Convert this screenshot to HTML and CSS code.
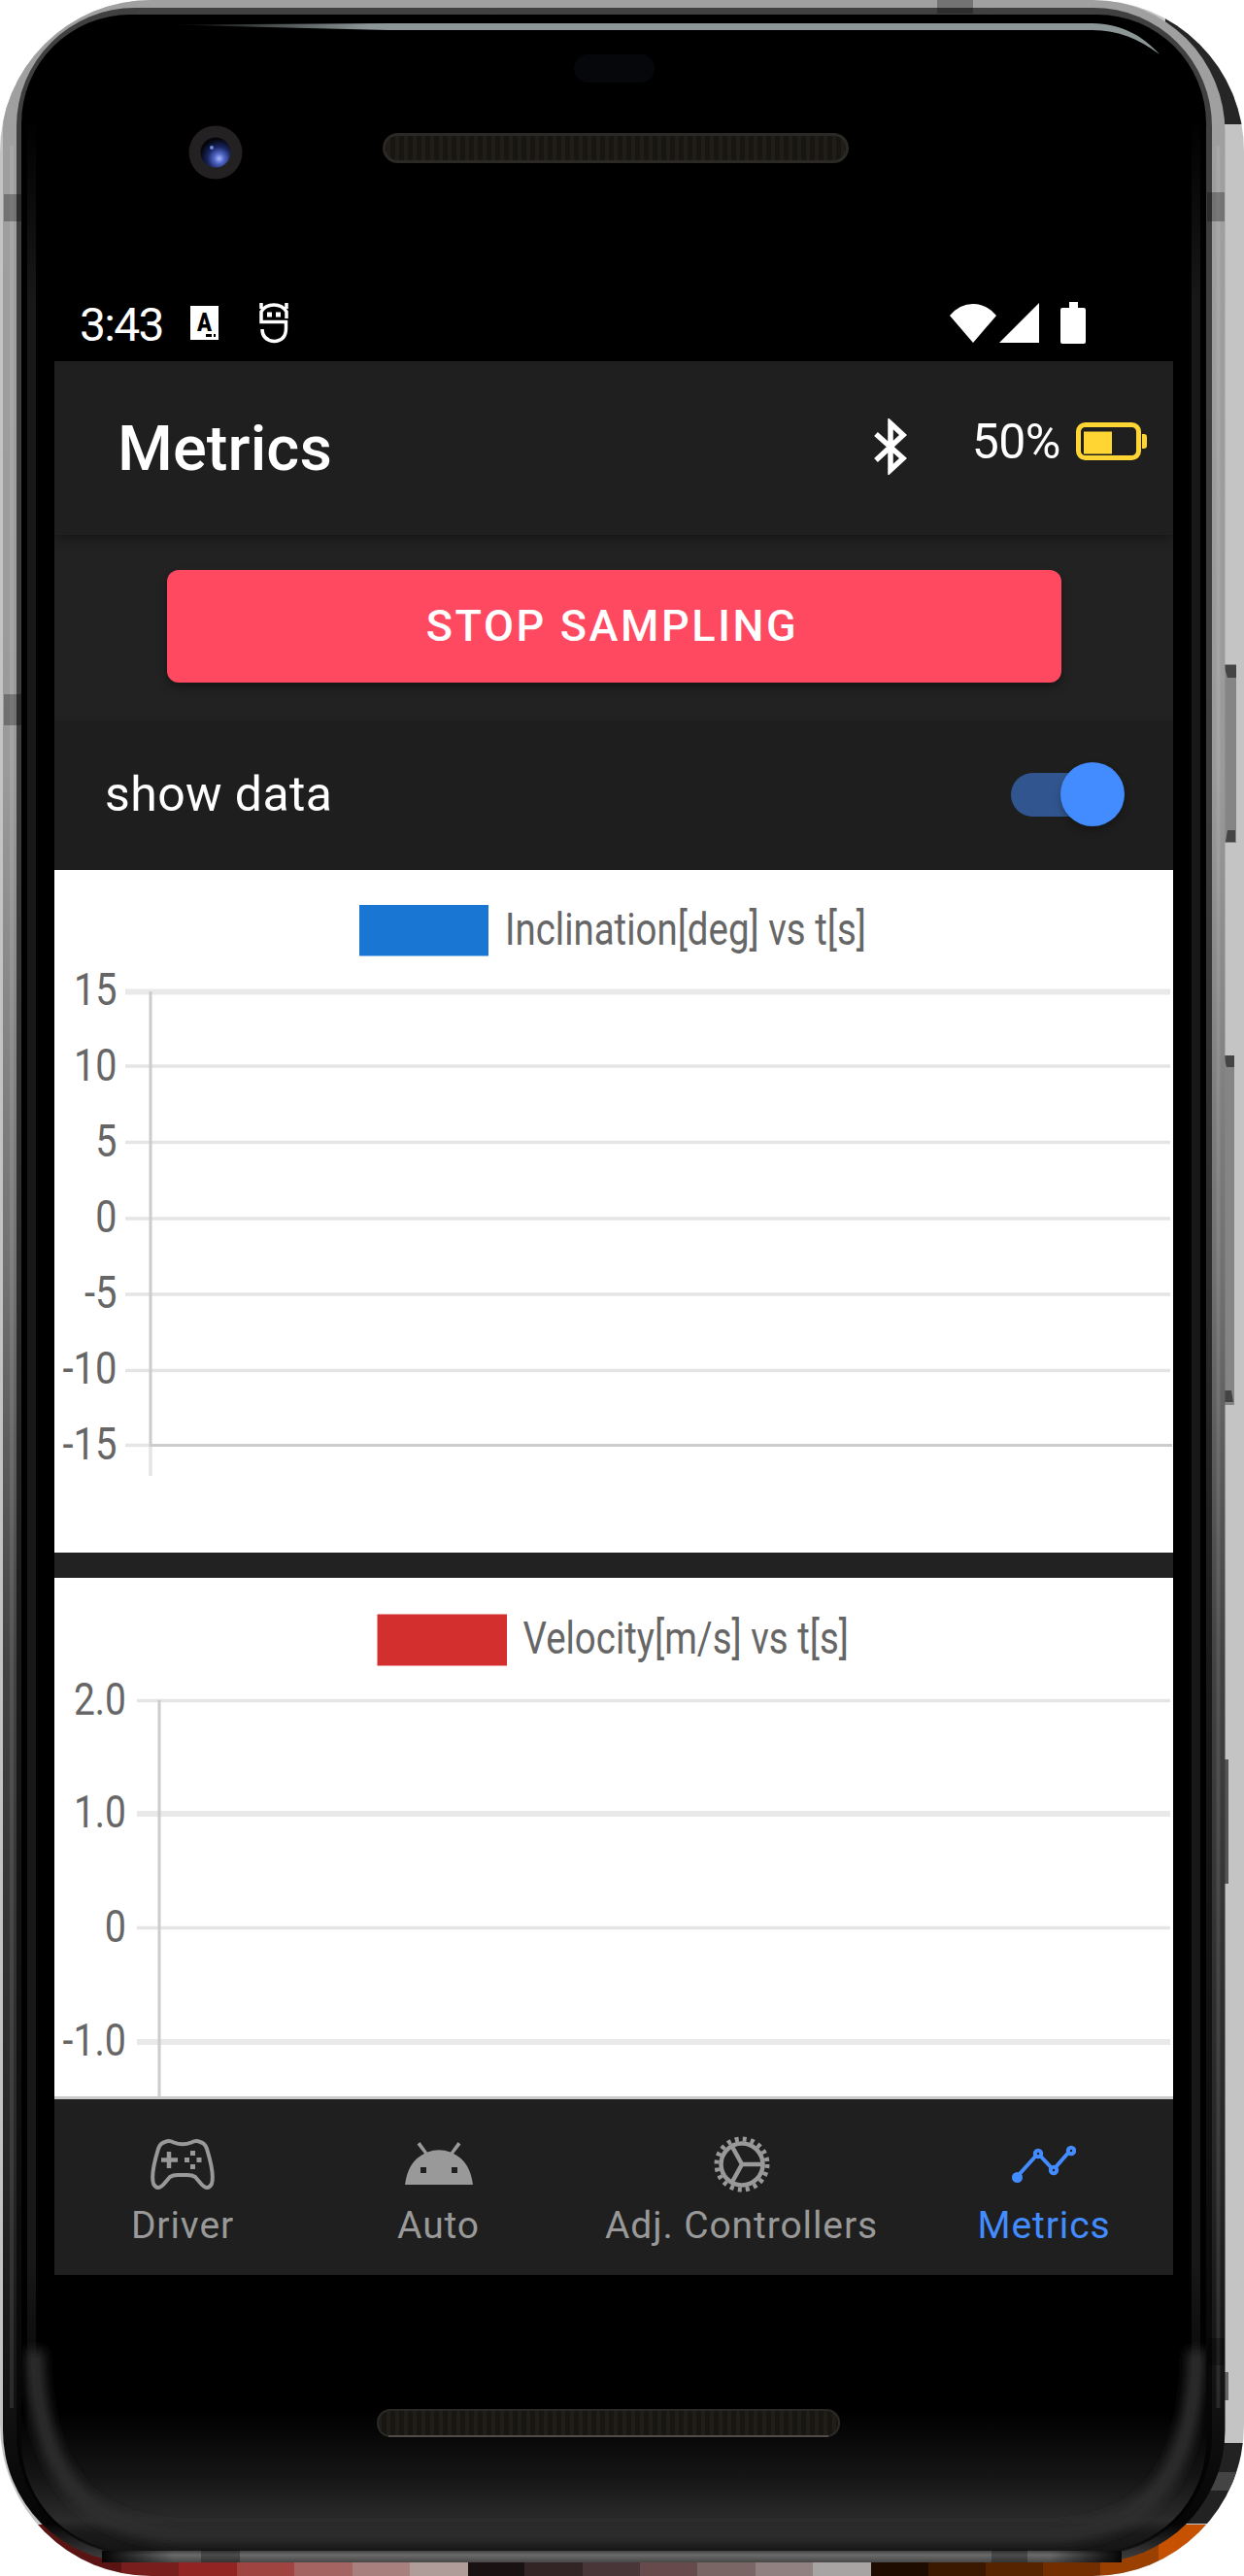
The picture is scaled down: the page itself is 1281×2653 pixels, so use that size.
FILE: index.html
```html
<!DOCTYPE html>
<html lang="en">
<head>
<meta charset="utf-8">
<title>Metrics</title>
<link rel="stylesheet" href="styles.css">
</head>
<body>
<div class="stage">
  <svg class="device" viewBox="0 0 1281 2653" aria-hidden="true">
    <defs>
      <linearGradient id="metal" x1="0" y1="0" x2="0" y2="1">
        <stop offset="0" stop-color="#a0a0a0"/><stop offset=".3" stop-color="#9a9a9a"/><stop offset=".5" stop-color="#707070"/><stop offset=".65" stop-color="#424242"/><stop offset=".85" stop-color="#252525"/><stop offset=".94" stop-color="#111"/><stop offset=".985" stop-color="#050505"/><stop offset="1" stop-color="#444"/>
      </linearGradient>
      <linearGradient id="glass" x1="0" y1="0" x2="0" y2="1">
        <stop offset="0" stop-color="#000"/><stop offset=".945" stop-color="#000"/><stop offset=".97" stop-color="#141414"/><stop offset=".988" stop-color="#2b2b2b"/><stop offset=".993" stop-color="#1a1a1a"/><stop offset="1" stop-color="#151515"/>
      </linearGradient>
      <linearGradient id="glint" x1="0" x2="1">
        <stop offset="0" stop-color="#8d9697" stop-opacity="0"/><stop offset=".2" stop-color="#8d9697"/><stop offset="1" stop-color="#8d9697"/>
      </linearGradient>
      <linearGradient id="chrome" x1="0" y1="0" x2="0" y2="1">
        <stop offset="0" stop-color="#444"/><stop offset=".35" stop-color="#6a6a6a"/><stop offset="1" stop-color="#484848"/>
      </linearGradient>
      <linearGradient id="chromeFade" x1="0" x2="1">
        <stop offset="0" stop-color="#050505"/><stop offset=".07" stop-color="#050505" stop-opacity="0"/><stop offset=".93" stop-color="#050505" stop-opacity="0"/><stop offset="1" stop-color="#050505"/>
      </linearGradient>
      <linearGradient id="sideGlow" x1="0" y1="0" x2="0" y2="1">
        <stop offset="0" stop-color="#181818" stop-opacity="0"/><stop offset=".08" stop-color="#181818"/><stop offset=".92" stop-color="#181818"/><stop offset="1" stop-color="#181818" stop-opacity="0"/>
      </linearGradient>
      <radialGradient id="lens" cx=".62" cy=".7" r=".65">
        <stop offset="0" stop-color="#a9b9ff"/><stop offset=".25" stop-color="#5369c8"/><stop offset=".6" stop-color="#18245e"/><stop offset="1" stop-color="#05060c"/>
      </radialGradient>
      <pattern id="mesh" width="9" height="40" patternUnits="userSpaceOnUse">
        <rect width="9" height="40" fill="#181613"/><rect x="2" width="4" height="40" fill="#211e1a"/>
      </pattern>
      <filter id="soft" x="-5%" y="-20%" width="110%" height="140%"><feGaussianBlur stdDeviation="6"/></filter>
      <clipPath id="glassClip"><rect x="22" y="15" width="1220" height="2612" rx="112"/></clipPath>
    </defs>
    <rect width="1281" height="2653" fill="#c4c4c4"/>
    <rect x="1200" width="81" height="128" fill="#262626"/>
    <rect x="1200" y="2516" width="81" height="83" fill="#222"/>
    <rect x="1240" y="2546" width="41" height="19" fill="#444"/>
    <g>
      <rect y="2600" width="125" height="53" fill="#5a1414"/><rect x="125" y="2600" width="59" height="53" fill="#781e1c"/><rect x="184" y="2600" width="60" height="53" fill="#922423"/><rect x="244" y="2600" width="59" height="53" fill="#a04442"/><rect x="303" y="2600" width="60" height="53" fill="#a36462"/><rect x="363" y="2600" width="59" height="53" fill="#a8807e"/><rect x="422" y="2600" width="60" height="53" fill="#b09c99"/><rect x="482" y="2600" width="58" height="53" fill="#191112"/><rect x="540" y="2600" width="60" height="53" fill="#332526"/><rect x="600" y="2600" width="59" height="53" fill="#483638"/><rect x="659" y="2600" width="59" height="53" fill="#664a4c"/><rect x="718" y="2600" width="60" height="53" fill="#7a6665"/><rect x="778" y="2600" width="59" height="53" fill="#918281"/><rect x="837" y="2600" width="60" height="53" fill="#a9a4a4"/><rect x="897" y="2600" width="59" height="53" fill="#1e0c00"/><rect x="956" y="2600" width="59" height="53" fill="#3b1800"/><rect x="1015" y="2600" width="59" height="53" fill="#562400"/><rect x="1074" y="2600" width="59" height="53" fill="#732e00"/><rect x="1133" y="2600" width="60" height="53" fill="#9a4000"/><rect x="1193" y="2600" width="88" height="53" fill="#c65100"/>
    </g>
    <g fill="#858585">
      <rect x="1260" y="684" width="13" height="184"/><rect x="1260" y="1087" width="11" height="360"/>
      <rect x="1260" y="1812" width="5" height="128" fill="#555"/><rect x="1260" y="2443" width="5" height="29" fill="#666"/>
      <path d="M1260 685h13v13h-9zM1260 1087h11v12h-8zM1264 855h8v12h-10zM1260 1432h8l2 12h-10z" fill="#444"/>
    </g>
    <rect x="3" width="1258.500" height="2639" rx="136" fill="url(#metal)"/>
    <path d="M12 150V2480M1254.500 150V2480" stroke="#fff" stroke-opacity=".1" stroke-width="4"/>
    <rect x="17" y="8" width="1231" height="2623" rx="122" fill="#000" fill-opacity=".6"/>
    <rect x="105" y="2627" width="1050" height="12" fill="url(#chrome)"/>
    <rect x="105" y="2627" width="1050" height="12" fill="url(#chromeFade)"/>
    <rect x="22" y="15" width="1220" height="2612" rx="112" fill="url(#glass)"/>
    <rect x="28" y="120" width="9" height="2400" fill="url(#sideGlow)"/>
    <rect x="1227" y="120" width="9" height="2400" fill="url(#sideGlow)"/>
    <g clip-path="url(#glassClip)">
      <path d="M36 2420C38 2540 80 2604 180 2610H1090C1190 2604 1230 2540 1232 2420" fill="none" stroke="#2d2d2d" stroke-width="18" filter="url(#soft)"/>
    </g>
    <g fill="#000" fill-opacity=".28">
      <rect x="4" y="200" width="18" height="28"/><rect x="4" y="715" width="18" height="32"/><rect x="1243" y="198" width="18" height="30"/><rect x="1243" y="2408" width="18" height="28"/>
      <rect x="965" width="37" height="14"/><rect x="207" y="2626" width="40" height="13"/><rect x="1021" y="2626" width="37" height="13"/>
    </g>
    <path d="M175 25.500L400 24H1125C1155 25 1176 36 1194 56C1172 40 1152 31 1125 31H400Z" fill="url(#glint)"/>
    <rect x="591" y="56" width="83" height="29" rx="14.500" fill="#05070b"/>
    <circle cx="222" cy="157" r="27.500" fill="#242122"/><circle cx="222" cy="157" r="15.500" fill="url(#lens)"/><circle cx="218" cy="152" r="2" fill="#6f86dd"/>
    <rect x="395.500" y="138.500" width="477" height="28" rx="14" fill="url(#mesh)" stroke="#2a2926" stroke-width="3"/>
    <rect x="389" y="2482" width="475" height="27" rx="13" fill="url(#mesh)" stroke="#2a2926" stroke-width="2"/>
    <path d="M400 2509H853" stroke="#504b46" stroke-width="2"/>
  </svg>

  <main class="screen">
    <div class="status">
      <span class="clock">3:43</span>
      <svg class="status-a" viewBox="0 0 29 35"><path d="M0 0H29V35H0Z" fill="#fff"/><text x="14.500" y="25.500" text-anchor="middle" font-size="25" font-weight="900" textLength="15" lengthAdjust="spacingAndGlyphs">A</text><path d="M16 29h6v3h-6zM24 29h2v3h-2z"/></svg>
      <svg class="status-s" viewBox="0 0 30 42" fill="none" stroke="#fff" stroke-width="3.500"><path d="M2 0V6M28 0V6M28 16V9Q24 2 15 2T2 9V19.500H27.500V26Q27.500 39 15 39.500Q3 38 3 27"/><path d="M8 12h5M17 12h5" stroke-width="5"/></svg>
      <span class="spacer"></span>
      <svg class="wifi" viewBox="0 0 48 41"><path d="M0 13Q10 1 24 1T48 13L24 41Z" fill="#fff"/></svg>
      <svg class="signal" viewBox="0 0 41 41"><path d="M41 0V41H0Z" fill="#fff"/></svg>
      <svg class="phone-battery" viewBox="0 0 26 43"><path d="M9 0H18V6H24Q26 6 26 8V41Q26 43 24 43H2Q0 43 0 41V8Q0 6 2 6H9Z" fill="#fff"/></svg>
    </div>

    <header class="toolbar">
      <h1>Metrics</h1>
      <svg class="bluetooth" viewBox="0 0 34 58" fill="none" stroke="#fff" stroke-width="5.500"><path d="M2 16L30 41L17 53V5L30 17L2 43"/></svg>
      <div class="charge"><span>50%</span>
        <svg viewBox="0 0 74 40"><rect x="2.500" y="2.500" width="62" height="34" rx="7" fill="none" stroke="#ffd534" stroke-width="5"/><path d="M8 9.500H37V32.500H8ZM68 12h2q3 0 3 3v9q0 3-3 3h-2z" fill="#ffd534"/></svg>
      </div>
    </header>

    <section class="action"><button class="stop" type="button">STOP SAMPLING</button></section>

    <section class="toggle-row">
      <span>show data</span>
      <span class="toggle"><span class="knob"></span></span>
    </section>

    <section class="charts">
      <svg class="chart" width="1152" height="703" viewBox="56 896 1152 703">
        <path d="M370 932H503V984.500H370Z" fill="#1976d2"/>
        <text x="520" y="973" textLength="372" lengthAdjust="spacingAndGlyphs">Inclination[deg] vs t[s]</text>
        <path d="M129 1021.500H1205" stroke="#e9e9e9" stroke-width="6"/>
        <path d="M129 1098H1205M129 1176.500H1205M129 1255H1205M129 1333H1205M129 1411.500H1205M129 1488.500H155M155 1489V1520" stroke="#e5e5e5" stroke-width="3.500"/>
        <path d="M155 1021V1488.500H1207" fill="none" stroke="#ccc" stroke-width="3"/>
        <g text-anchor="end">
          <text x="120.500" y="1035" textLength="44.500" lengthAdjust="spacingAndGlyphs">15</text>
          <text x="120.500" y="1112.500" textLength="44.500" lengthAdjust="spacingAndGlyphs">10</text>
          <text x="120.500" y="1191" textLength="22.200" lengthAdjust="spacingAndGlyphs">5</text>
          <text x="120.500" y="1269" textLength="22.200" lengthAdjust="spacingAndGlyphs">0</text>
          <text x="120.500" y="1347" textLength="33.500" lengthAdjust="spacingAndGlyphs">-5</text>
          <text x="120.500" y="1425" textLength="56" lengthAdjust="spacingAndGlyphs">-10</text>
          <text x="120.500" y="1503" textLength="56" lengthAdjust="spacingAndGlyphs">-15</text>
        </g>
      </svg>
      <svg class="chart" width="1152" height="537" viewBox="56 1625 1152 537">
        <path d="M388.500 1662.500H522V1715.500H388.500Z" fill="#d32f2f"/>
        <text x="538.500" y="1703" textLength="335.500" lengthAdjust="spacingAndGlyphs">Velocity[m/s] vs t[s]</text>
        <path d="M141 1751.500H1205M141 1985.500H1205" stroke="#e5e5e5" stroke-width="3.500"/>
        <path d="M141 1868H1205M141 2103H1205" stroke="#e9e9e9" stroke-width="6"/>
        <path d="M164 1751V2162" stroke="#ccc" stroke-width="3"/>
        <path d="M56 2160.500H1208" stroke="#c9c9c9" stroke-width="3"/>
        <g text-anchor="end">
          <text x="130" y="1766" textLength="54" lengthAdjust="spacingAndGlyphs">2.0</text>
          <text x="130" y="1882" textLength="54" lengthAdjust="spacingAndGlyphs">1.0</text>
          <text x="130" y="2000" textLength="22.200" lengthAdjust="spacingAndGlyphs">0</text>
          <text x="130" y="2117" textLength="65.500" lengthAdjust="spacingAndGlyphs">-1.0</text>
        </g>
      </svg>
    </section>

    <nav class="tabs">
      <a class="tab"><svg width="66" height="58" viewBox="0 0 66 58" fill="none" stroke="currentColor" stroke-width="4"><path d="M15 6Q19 4 24 6.500Q33 10 42 6.500Q47 4 51 6Q56 7 58 13Q66 39 63 49Q59 57 52 49L46 42Q43 40 38 40H28Q23 40 20 42L14 49Q7 57 3 49Q0 39 8 13Q10 7 15 6Z"/><path d="M19 16V33M11 24.500H28" stroke-width="4.500"/><path d="M43.500 15V20M43.500 29V34M35 24.500H40M47.500 24.500H52.500" stroke-width="5"/></svg><span>Driver</span></a>
      <a class="tab"><svg width="70" height="58" viewBox="0 0 70 58"><path d="M0 50Q3 26 20 18L12.500 8.500L15.500 6L23 16.500Q35 12 47 16.500L54.500 6L57.500 8.500L50 18Q67 26 70 50ZM16 32v6h6v-6zM48 32v6h6v-6z" fill="currentColor" fill-rule="evenodd"/></svg><span>Auto</span></a>
      <a class="tab"><svg width="58" height="58" viewBox="-29 -29 58 58" fill="none" stroke="currentColor"><circle r="21.500" stroke-width="4.500"/><circle r="26" stroke-width="5" stroke-dasharray="4 4.168"/><path d="M0 0H22M0 0L-10.500 -19M0 0L-10.500 19" stroke-width="4.500"/></svg><span>Adj. Controllers</span></a>
      <a class="tab active"><svg width="66" height="58" viewBox="0 0 66 58" fill="none" stroke="currentColor" stroke-width="4"><path d="M6 41L25 20M29 20L41 33M45 32L59 16"/><circle cx="5.500" cy="42.500" r="5.500" fill="currentColor" stroke="none"/><circle cx="27" cy="18" r="3.200"/><circle cx="43" cy="35" r="3.200"/><circle cx="61" cy="15" r="3.200"/></svg><span>Metrics</span></a>
    </nav>
  </main>
</div>
</body>
</html>
```
FILE: styles.css
```css
* { box-sizing: border-box; }
body {
  margin: 0;
  background: #fff;
  font-family: Roboto, "Liberation Sans", sans-serif;
}
.stage {
  position: relative;
  width: 1281px;
  height: 2653px;
  padding: 300px 73px 0 56px;
  border-radius: 156px;
  overflow: hidden;
}
.device {
  position: absolute;
  inset: 0;
  width: 1281px;
  height: 2653px;
}
.screen {
  position: relative;
  display: flex;
  flex-direction: column;
  color: #fff;
}

/* Android status bar */
.status {
  display: flex;
  height: 72px;
  padding: 0 90px 7px 26px;
  align-items: center;
}
.clock {
  width: 114px;
  padding-top: 3px;
  font-size: 48px;
  letter-spacing: -1.700px;
}
.status-a { width: 29px; height: 35px; }
.status-s { width: 30px; height: 42px; margin-left: 42px; }
.spacer { flex: 1; }
.wifi { width: 48px; height: 41px; }
.signal { width: 41px; height: 41px; margin-left: 3px; }
.phone-battery { width: 26px; height: 43px; margin-left: 22px; }

/* App header */
.toolbar {
  position: relative;
  display: flex;
  align-items: center;
  height: 179px;
  padding: 0 26px 0 65px;
  background: #1f1f1f;
  box-shadow: 0 2px 12px rgba(0, 0, 0, .45);
}
h1 {
  flex: 1;
  margin: 0;
  font-size: 65px;
  font-weight: 500;
  letter-spacing: .1px;
}
.bluetooth { width: 34px; height: 58px; margin-bottom: 4px; }
.charge {
  display: flex;
  align-items: center;
  margin-left: 67px;
  padding-bottom: 14px;
  font-size: 50px;
  letter-spacing: -.5px;
}
.charge svg { width: 74px; height: 40px; margin-left: 16px; }

.action {
  height: 191px;
  padding: 36px 115px 0 116px;
  background: #222;
}
.stop {
  display: block;
  width: 921px;
  height: 116px;
  padding: 0 4px 2px 0;
  border: 0;
  border-radius: 12px;
  background: #ff4961;
  box-shadow: 0 5px 10px rgba(0, 0, 0, .35);
  color: #fff;
  font: 500 45px Roboto, sans-serif;
  letter-spacing: 2.600px;
}
.toggle-row {
  display: flex;
  height: 154px;
  align-items: center;
  justify-content: space-between;
  padding: 0 50px 2px 52px;
  background: #1e1e1e;
  font-size: 50px;
  letter-spacing: .4px;
}
.toggle {
  display: flex;
  width: 117px;
  height: 45px;
  align-items: center;
  justify-content: flex-end;
  border-radius: 23px;
  background: linear-gradient(90deg, #31568f 0 80px, transparent 80px);
}
.knob {
  width: 66px;
  height: 66px;
  border-radius: 50%;
  background: #428cff;
  box-shadow: 0 5px 8px rgba(0, 0, 0, .25);
}

.charts {
  display: flex;
  flex-direction: column;
  gap: 26px;
  background: #222;
}
.chart {
  display: block;
  background: #fff;
  font-size: 47px;
}
.chart text { fill: #666; }

.tabs {
  display: grid;
  grid-template-columns: 265px 262px 362px 263px;
  height: 181px;
  background: #1f1f1f;
}
.tab {
  display: flex;
  flex-direction: column;
  align-items: center;
  padding-top: 38px;
  padding-right: 1px;
  color: #999;
  font-size: 39px;
  line-height: 46px;
  letter-spacing: .9px;
}
.tab span { margin-top: 11px; white-space: nowrap; }
.tab.active { padding-right: 3px; color: #428cff; }
```
